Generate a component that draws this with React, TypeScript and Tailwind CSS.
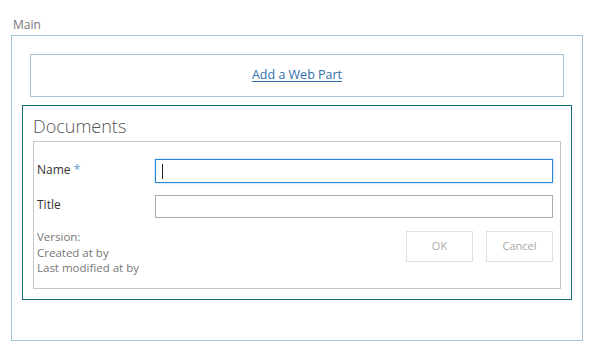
import React from 'react';

const font = { fontFamily: '"Open Sans", "Noto Sans", sans-serif' };

const App: React.FC = () => {
  return (
    <div className="w-[610px] h-[360px] bg-white overflow-hidden" style={font}>
      <div className="pl-[13px] pt-[17px] h-[35px] text-[12px] leading-[16px] text-[#777]">Main</div>

      <div className="ml-[11px] w-[572px] h-[306px] border border-[#a3c4d6] pl-[18px] pr-[18px] pt-[18px]">
        <div className="w-[534px] h-[43px] border border-[#a3c4d6] flex items-center justify-center">
          <a href="#" className="text-[12.5px] text-[#2f6ead] underline underline-offset-2">
            Add a Web Part
          </a>
        </div>

        <div className="-ml-[8px] mt-[8px] w-[550px] h-[195px] border border-[#17697e] px-[10px]">
          <div className="pt-[8px] h-[35px] text-[18px] leading-[24px] font-light text-[#555]">Documents</div>

          <div className="h-[148px] border border-[#c6c6c6] pl-[3px] pr-[7px] pt-[17px]">
            <div className="flex items-center h-[24px]">
              <div className="w-[118px] text-[12px] text-[#333] -mt-[3px]">
                Name <span className="text-[#5b9bd0]">*</span>
              </div>
              <div className="flex-1 h-[24px] border border-[#2b88d8] shadow-[0_0_2px_#8cc0ec] flex items-center pl-[6px]">
                <div className="w-px h-[15px] bg-[#222]" />
              </div>
            </div>

            <div className="flex items-center h-[23px] mt-[12px]">
              <div className="w-[118px] text-[12px] text-[#333] -mt-[4px]">Title</div>
              <div className="flex-1 h-[23px] border border-[#ababab]" />
            </div>

            <div className="flex justify-between mt-[13px]">
              <div className="-mt-[2px] text-[11.5px] leading-[15.5px] text-[#777]">
                <div>Version:</div>
                <div>Created at by</div>
                <div>Last modified at by</div>
              </div>
              <div className="flex gap-[13px]">
                <button className="w-[67px] h-[31px] border border-[#e1e1e1] text-[11px] text-[#acacac] bg-white">OK</button>
                <button className="w-[67px] h-[31px] border border-[#e1e1e1] text-[11px] text-[#a6a6a6] bg-white">Cancel</button>
              </div>
            </div>
          </div>
        </div>
      </div>
    </div>
  );
};

export default App;
